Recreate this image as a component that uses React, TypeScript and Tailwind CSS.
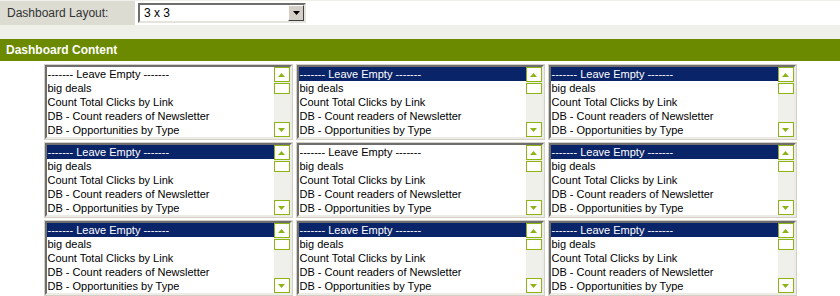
import React from 'react';

const ITEMS = [
  '------- Leave Empty -------',
  'big deals',
  'Count Total Clicks by Link',
  'DB - Count readers of Newsletter',
  'DB - Opportunities by Type',
];

// which boxes have the first entry highlighted
const SELECTED = [false, true, true, true, false, true, true, true, true];

const Arrow = ({ up }: { up?: boolean }) => (
  <svg width="7" height="4" viewBox="0 0 7 4" className="block">
    {up ? <polygon points="0,4 7,4 3.5,0" fill="#8cb414" /> : <polygon points="0,0 7,0 3.5,4" fill="#8cb414" />}
  </svg>
);

const ScrollBar = () => (
  <div className="flex w-[16px] flex-col bg-[#f0f0ea]">
    <div className="flex h-[15px] items-center justify-center border border-[#8cb414] bg-white">
      <Arrow up />
    </div>
    <div className="mt-px h-[11px] border border-[#8cb414] bg-white" />
    <div className="flex-1" />
    <div className="flex h-[15px] items-center justify-center border border-[#8cb414] bg-white">
      <Arrow />
    </div>
  </div>
);

const ListBox = ({ selected }: { selected: boolean }) => (
  <div className="border border-[#d4d0c8] bg-white">
    <div className="flex h-[74px] border-2 border-t-[#6e6e6e] border-l-[#6e6e6e] border-r-[#ecebe6] border-b-[#ecebe6]">
      <div className="flex-1 overflow-hidden">
        {ITEMS.map((item, i) => (
          <div
            key={item}
            className={`h-[14px] whitespace-nowrap pl-[1px] text-[11px] leading-[14px] ${
              i === 0 && selected ? 'bg-[#0a246a] text-white' : 'text-black'
            }`}
          >
            {item}
          </div>
        ))}
      </div>
      <ScrollBar />
    </div>
  </div>
);

export default function App() {
  return (
    <div className="h-[296px] w-[840px] overflow-hidden bg-white font-['Liberation_Sans',Arial,sans-serif]">
      {/* Layout picker */}
      <div className="flex h-[25px] border-t border-[#f0f0ea] bg-white">
        <div className="flex w-[135px] items-center bg-[#dcdcd3] pl-[7px] text-[12px] text-[#333]">
          Dashboard Layout:
        </div>
        <div className="flex items-center pl-[3px]">
          <div className="flex h-[20px] w-[168px] border-2 border-t-[#6e6e6e] border-l-[#6e6e6e] border-r-[#e4e3dc] border-b-[#e4e3dc] bg-white">
            <div className="flex-1 pl-[4px] text-[12px] leading-[16px] text-black">3 x 3</div>
            <div className="flex w-[16px] items-center justify-center border border-t-white border-l-white border-r-[#404040] border-b-[#404040] bg-[#d4d0c8]">
              <svg width="7" height="4" viewBox="0 0 7 4" className="block">
                <polygon points="0,0 7,0 3.5,4" fill="#000" />
              </svg>
            </div>
          </div>
        </div>
      </div>

      <div className="h-[14px] bg-[#f0f0ea]" />

      {/* Section header */}
      <div className="flex h-[22px] items-center bg-[#6b8a00] pl-[6px] text-[12px] font-bold text-white">
        Dashboard Content
      </div>

      {/* Grid of list boxes */}
      <div className="flex justify-center pt-[3px]">
        <div className="grid grid-cols-[249px_249px_249px] gap-x-[3px] gap-y-[2px]">
          {SELECTED.map((s, i) => (
            <ListBox key={i} selected={s} />
          ))}
        </div>
      </div>
    </div>
  );
}
